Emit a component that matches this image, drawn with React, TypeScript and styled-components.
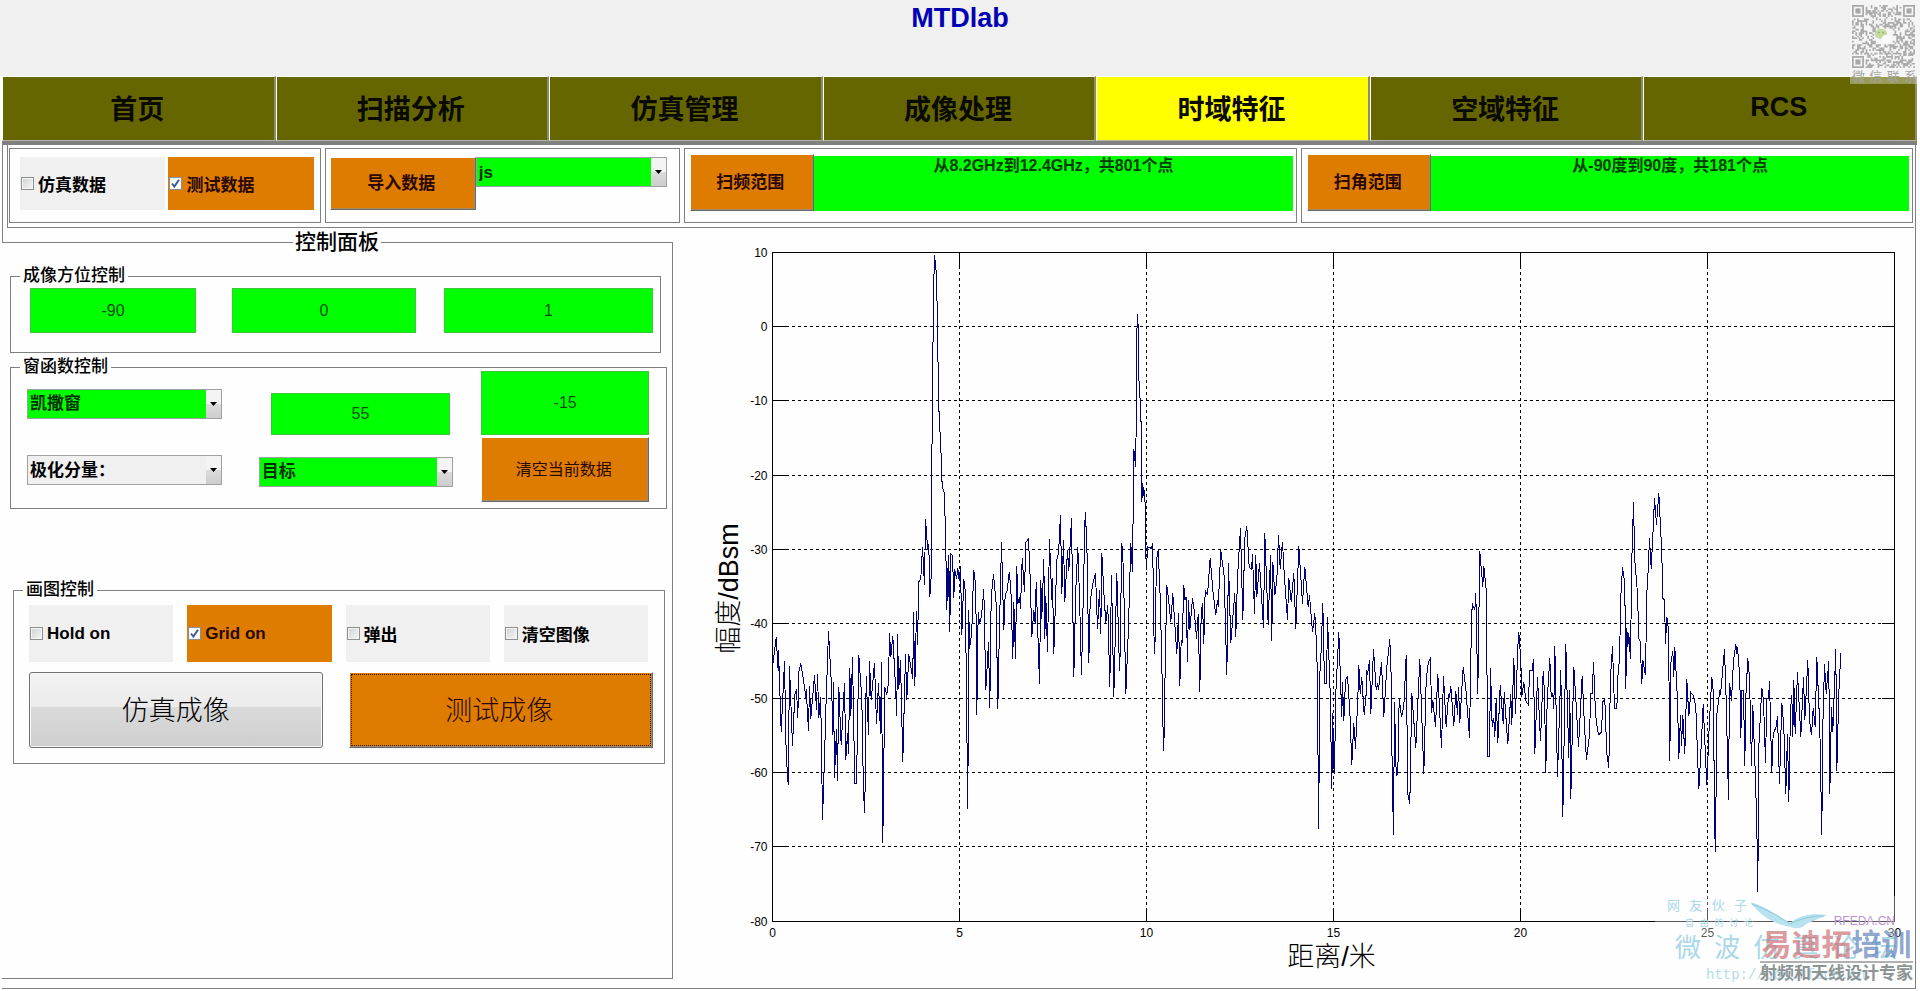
import React from "react";
import styled, { createGlobalStyle } from "styled-components";

const SANS = `"Liberation Sans", "Noto Sans CJK SC", sans-serif`;
const LINE = "#808080";
const GREEN = "#00ff00";
const ORANGE = "#de7c00";
const OLIVE = "#666600";

const GlobalStyle = createGlobalStyle`
  *, *::before, *::after { box-sizing: border-box; }
  body { margin: 0; background: #fefefe; color: #000; font-family: ${SANS}; font-size: 17px; }
  button, input, select { font-family: inherit; margin: 0; }
`;

/* ---------- page frame ---------- */

const Page = styled.div`
  position: relative;
  min-height: 100vh;
  display: flex;
  flex-direction: column;
`;

const Header = styled.header`
  height: 76px;
  padding-top: 2px;
  background: #f0f0f0;
  text-align: center;
`;

const Title = styled.h1`
  margin: 0;
  font-size: 27px;
  line-height: 32px;
  color: #0000b4;
`;

const Tabs = styled.nav`
  display: grid;
  grid-template-columns: repeat(7, minmax(0, 1fr));
  margin: 0 3px 0 2px;
  border-bottom: 4px solid ${LINE};
`;

const Tab = styled.button<{ $active?: boolean }>`
  height: 65px;
  padding: 0 2px 3px 0;
  border: solid;
  border-width: 1px 2px 1px 1px;
  border-color: #fffff0 #8c8c74 #b4b4a0 #fffff0;
  background: ${(p) => (p.$active ? "#ffff00" : OLIVE)};
  color: #0a0a00;
  font-size: 27px;
  font-weight: 700;
`;

const Frame = styled.main`
  position: relative;
  margin: 0 4px 0 2px;
  border-right: 1px solid ${LINE};
  border-bottom: 1px solid ${LINE};
`;

/* ---------- toolbar ---------- */

const ToolbarShell = styled.div`
  border-left: 1px solid ${LINE};
  padding: 0 1px 14px 4px;
  margin-bottom: -14px;
`;

const Toolbar = styled.div`
  display: grid;
  grid-template-columns: 312fr 355fr 614fr 612fr;
  gap: 4px;
  height: 83px;
  padding: 3px 1px 4px 1px;
  border-left: 1px solid ${LINE};
  border-bottom: 1px solid ${LINE};
`;

const Section = styled.section<{ $lead?: number }>`
  display: flex;
  align-items: flex-start;
  min-width: 0;
  padding: ${(p) => (p.$lead ? "5px 3px 0 5px" : "8px 6px 0 10px")};
  border: 1px solid ${LINE};
`;

const ImportSection = styled(Section)`
  padding: 8px 12px 0 4px;
`;

const DataChoices = styled.div`
  flex: 1;
  display: grid;
  grid-template-columns: 1fr 1fr;
  gap: 3px;
`;

const Choice = styled.label<{ $on?: boolean; $tall?: boolean }>`
  display: flex;
  align-items: center;
  gap: 4px;
  height: ${(p) => (p.$tall ? 57 : 53)}px;
  padding-left: 1px;
  background: ${(p) => (p.$on ? ORANGE : "#f0f0f0")};
  color: ${(p) => (p.$on ? "#2a0800" : "#000")};
  font-size: 17px;
  font-weight: 700;
  white-space: nowrap;
`;

const Tick = styled.span`
  display: grid;
  width: 13px;
  height: 13px;
  & > * { grid-area: 1 / 1; }
`;

const TickInput = styled.input`
  appearance: none;
  width: 13px;
  height: 13px;
  border: 1px solid #8e8f8f;
  background: linear-gradient(135deg, #cfd2d5, #f6f6f6);
  box-shadow: inset 0 0 0 1px #f4f4f4;
  &:checked { background: #fff; }
  &:not(:checked) + svg { visibility: hidden; }
`;

const PushButton = styled.button<{ $size?: number; $bold?: boolean }>`
  width: 100%;
  height: 100%;
  padding: 0 3px 4px 0;
  border: 1px solid;
  border-color: #fff #696969 #696969 #fff;
  box-shadow: inset -1px -1px 0 #a88a60;
  background: ${ORANGE};
  color: #2a0800;
  font-size: ${(p) => p.$size ?? 17}px;
  font-weight: ${(p) => (p.$bold ? 700 : 400)};
  white-space: nowrap;
`;

const ImportSlot = styled.div`
  flex: 0 0 146px;
  height: 53px;
`;

const RangeSlot = styled.div`
  flex: 0 0 124px;
  height: 57px;
`;

const RangeText = styled.output`
  flex: 1;
  height: 55px;
  margin-top: 2px;
  background: ${GREEN};
  color: #003c00;
  font-size: 16px;
  font-weight: 700;
  line-height: 20px;
  text-align: center;
`;

/* ---------- form parts ---------- */

const Dropdown = styled.div`
  position: relative;
  width: 100%;
  height: 30px;
`;

const Select = styled.select<{ $plain?: boolean }>`
  appearance: none;
  width: 100%;
  height: 30px;
  padding: 0 18px 0 2px;
  border: 1px solid #a0a0a0;
  border-radius: 0;
  background: ${(p) => (p.$plain ? "#f0f0f0" : GREEN)};
  color: ${(p) => (p.$plain ? "#000" : "#003000")};
  font-size: 17px;
  font-weight: 700;
`;

const Arrow = styled.span`
  position: absolute;
  top: 1px;
  right: 1px;
  bottom: 1px;
  width: 15px;
  display: grid;
  place-items: center;
  background: linear-gradient(#f4f4f4 50%, #dcdcdc 50%, #cdcdcd);
  pointer-events: none;
`;

const GreenInput = styled.input<{ $height: number }>`
  width: 100%;
  min-width: 0;
  height: ${(p) => p.$height}px;
  padding: 0;
  border: 1px solid #3cc83c;
  background: ${GREEN};
  color: #0a500a;
  font-size: 16px;
  text-align: center;
`;

/* ---------- left control panel ---------- */

const Workspace = styled.div`
  display: grid;
  grid-template-columns: minmax(0, 671fr) minmax(0, 1242fr);
`;

const ControlPanel = styled.fieldset`
  min-width: 0;
  margin: 3px 0 9px;
  padding: 0;
  border: solid ${LINE};
  border-width: 1px 1px 1px 0;
`;

const PanelLegend = styled.legend`
  margin: 0 auto;
  padding: 0 2px;
  font-size: 21px;
  line-height: 22px;
  font-weight: 500;
`;

const Group = styled.fieldset<{ $margin: string; $padding: string }>`
  min-width: 0;
  margin: ${(p) => p.$margin};
  padding: ${(p) => p.$padding};
  border: 1px solid ${LINE};
`;

const GroupLegend = styled.legend`
  margin-left: 9px;
  padding: 0 3px;
  font-size: 17px;
  line-height: 20px;
  font-weight: 500;
`;

const AngleRow = styled.div`
  display: grid;
  grid-template-columns: 166fr 36fr 184fr 28fr 209fr;
  padding: 0 7px 0 19px;
  & > :nth-child(2) { grid-column: 3; }
  & > :nth-child(3) { grid-column: 5; }
`;

const WindowGrid = styled.div`
  display: grid;
  grid-template-columns: 195fr 232fr 196fr;
  grid-template-rows: 64px 65px;
  row-gap: 2px;
  align-items: center;
  margin-top: -6px;
  padding: 0 17px 0 16px;
  & > :nth-child(3n + 1) { padding-top: 1px; }
  & > :nth-child(3n + 2) { padding-left: 37px; }
`;

const ThresholdCell = styled.div`
  height: 100%;
  padding-left: 28px;
`;

const KaiserSlot = styled.div`
  align-self: end;
  & > input { margin-left: 12px; width: calc(100% - 15px); }
`;

const PickerCell = styled.div`
  padding-top: 4px;
`;

const PlotChoices = styled.div`
  display: grid;
  grid-template-columns: repeat(4, minmax(0, 1fr));
  gap: 14px;
  padding: 0 16px 0 15px;
`;

const ActionRow = styled.div`
  display: grid;
  grid-template-columns: 294fr 305fr;
  gap: 26px;
  height: 76px;
  margin-top: 10px;
  padding: 0 11px 0 15px;
`;

const SilverButton = styled.button`
  padding: 0 0 4px;
  border: 1px solid #707070;
  border-radius: 3px;
  box-shadow: inset 0 0 0 1px #f8f8f8;
  background: linear-gradient(#f2f2f2, #ebebeb 46%, #dadada 46%, #cfcfcf);
  color: #000;
  font-size: 27px;
  font-weight: 300;
`;

const FocusedButton = styled(PushButton)`
  font-weight: 300;
  outline: 1px dotted #301800;
  outline-offset: -3px;
`;

/* ---------- chart ---------- */

const Chart = styled.svg`
  display: block;
  width: 100%;
  height: auto;
  font-family: ${SANS};
  font-size: 12px;
`;

/* Each block holds x,y pairs in thirds of a pixel, offset by its own origin
   from the top-left corner of the axes. */
const SWEEP: { dx: number; dy: number; points: string }[] = [
  {
    dx: -37,
    dy: 1043,
    points:
      "38,195 48,112 54,212 55,150 63,395 73,183 78,465 84,555 88,198 97,437 104,285 109,267 113,352 116,215 122,190 133,260 137,295 138,268 145,392 148,258 152,355 163,225 169,330 172,222 176,352 181,292 183,375 187,660 194,445 197,330 205,93 215,275 218,405 220,247 223,533 229,388 232,542 236,262 243,435 253,248 257,478 262,400 265,460 269,205 272,348 277,170 284,550 289,550 296,165 305,295 310,578 314,638 318,228 325,403 328,183 333,300 343,188 349,372 355,250 361,400 364,186 368,728 374,260 380,285 385,245 388,98 392,170 398,108 405,240 410,348 412,102 416,265 421,180 428,485 436,163 440,298 446,163 458,235 460,37 464,258 469,33 472,135",
  },
  {
    dx: -217,
    dy: -67,
    points:
      "656,1055 662,1045 667,952 673,1065 676,867 683,960 686,943 689,1100 693,1040 695,660 697,600 698,385 701,155 703,75 709,135 711,240 714,430 717,570 721,625 726,770 733,790 737,955 740,1140 743,1015 745,1100 746,975 749,1205 752,972 757,975 761,1103 764,1018 769,1045 773,1015 777,1052 781,1008 785,1213 791,1048 795,1080 798,1310 801,1590 803,1737 806,1140 808,1255 815,1205 818,1100 821,1020 827,1070 830,1455 834,1145 838,1180 844,1158 851,1078 857,1380 865,1237 869,1432 873,1100 880,1033 888,1120 893,1437 897,1230 904,937 911,1200 915,1093 921,1082 927,1027 932,1070 938,1285 941,1115 946,1285 950,1007 953,1120 958,1100 961,1135 966,985 973,1085 977,937 985,925 990,1045 995,1220 1001,1140 1005,1180 1008,1055 1018,1362 1022,1050 1025,1165 1031,987 1034,1225 1037,1097 1042,1265 1048,927 1055,1110 1057,1045 1061,1270 1070,990 1075,970 1081,855 1085,1090 1090,930 1094,1115 1102,960 1106,1022 1114,865 1121,1340 1127,1080 1133,950 1138,1100 1144,1335 1155,847 1160,930 1166,1297 1170,1115 1178,1060 1186,1030 1192,1195 1198,1080 1202,1210 1205,968 1211,1085 1217,1178 1223,1125 1229,1370 1234,1035 1241,1400 1250,1030 1258,1320",
  },
  {
    dx: 923,
    dy: 683,
    points:
      "119,570 125,188 130,270 137,642 145,440 152,190 157,275 160,0 161,-92 164,-65 166,-40 169,-210 170,-440 172,-498 175,-440 176,-310 179,-247 182,-245 183,-115 185,65 188,10 190,48 194,30 196,150 198,268 203,200 214,205 218,190 220,435 224,520 229,240 234,210 240,350 245,545 248,720 251,812 255,560 260,315 266,365 272,425 278,340 290,522 295,400 299,617 303,480 306,485 311,315 314,360 318,350 322,545 325,360 329,450 337,355 342,390 349,475 354,403 359,635 363,400 367,368 371,490 375,330 382,345 390,233 398,330 407,405 412,360 414,380 422,210 432,290 440,585 445,250 452,487 464,340 467,470 472,290 481,145 488,418 494,175 500,138 507,260 514,268 517,222 523,400 527,225 530,350 538,250 550,442 554,160 564,435 571,225 575,482 578,245 584,345 590,300 595,165 600,265 607,185 612,280 622,420 626,295 633,365 641,280 647,445 656,198 667,370 674,260 684,380 688,345 697,455 704,400 709,490 712,600 714,905 716,1047 718,600 723,510 728,370 733,610 739,610 742,410 750,640 755,925 758,700 760,850 763,880 767,640 770,580 776,457 785,710 787,605 791,722 796,600 802,590 809,690 815,853 821,730 826,805 833,655 836,555 840,640 845,592 852,705 858,640 860,570 862,585 868,540 872,700 880,508 888,630 892,610 895,630 904,547 911,710 920,560 929,478 933,590 936,880 940,1065 943,665 948,885 953,880 957,655 964,710 971,680 978,525 983,940 989,972 995,640 1007,803 1019,537 1031,880 1038,600 1044,550 1051,532 1054,697 1058,660 1066,740 1073,583 1079,700 1084,803 1090,588 1098,740 1105,645 1108,650 1112,618 1121,738 1127,632 1132,705 1135,620 1139,727 1149,560 1157,625 1168,773 1173,470 1176,370 1184,390 1187,340 1193,640 1199,213 1208,320 1211,257 1218,330 1223,830 1228,828 1231,565 1236,740 1241,715 1244,770 1248,655 1253,787",
  },
  {
    dx: 2123,
    dy: 623,
    points:
      "60,676 69,790 72,697 83,852 92,703 95,795 101,595 106,762 113,560 116,517 122,600 125,710 131,665 137,722 144,733 149,632 156,630 160,598 164,882 172,652 181,843 189,632 193,700 197,937 201,720 209,593 213,710 218,700 221,745 224,557 232,950 242,630 248,1070 257,552 266,893 269,690 272,1015 281,620 287,715 295,860 306,648 313,800 319,898 328,825 332,700 336,700 340,605 346,760 352,810 356,823 364,815 368,725 374,718 380,880 386,922 391,650 397,558 403,745 410,745 414,630 418,600 422,410 427,322 434,370 437,687 440,505 443,560 446,520 451,597 455,300 460,127 464,300 472,400 476,535 480,545 485,672 488,600 496,645 500,400 504,330 508,235 513,325 518,230 523,115 529,193 536,100 541,200 545,280 548,415 553,420 556,550 560,470 565,510 569,902 572,610 578,572 581,650 584,562 592,720 596,895 601,765 604,858 608,765 614,880 620,657 626,768 632,697 640,705 647,740 656,987 662,880 669,733 680,975 687,800 695,652 700,700 703,1095 706,1175 710,765 719,690 721,705 733,568 738,720 745,1020 748,668 754,722 760,600 767,552 770,580 772,562 779,650 782,833 785,690 790,690 794,917 797,710 803,595 808,650 814,917 818,735 826,960 830,1095 833,1295 836,860 845,683 850,720 856,908 860,715 865,715 868,663 875,935 879,820 888,800 892,767 898,970 905,728 911,800 917,1000 922,823 926,1025 931,750 935,705 938,830 941,660 945,820 952,637 962,830 970,652 974,780 983,600 988,780 994,825 999,745 1005,800 1010,592 1019,800 1025,1123 1028,800 1033,612 1038,700 1046,603 1049,1000 1054,740 1058,815 1067,568 1070,932 1076,700 1082,578",
  },
];

const tracePoints = SWEEP.flatMap(({ dx, dy, points }) =>
  points.split(" ").map((pair) => {
    const [x, y] = pair.split(",").map(Number);
    return `${((x + dx) / 3).toFixed(1)},${((y + dy) / 3).toFixed(1)}`;
  })
).join(" ");

const PLOT_W = 1122;
const PLOT_H = 669;
const TICK = 13;
const X_TICKS = [0, 5, 10, 15, 20, 25, 30];
const Y_TICKS = [10, 0, -10, -20, -30, -40, -50, -60, -70, -80];

function TimeDomainChart() {
  return (
    <Chart viewBox="0 0 1242 760" role="img" aria-label="幅度 / 距离">
      <g transform="translate(99.5 24.5)">
        <g shapeRendering="crispEdges" stroke="#000" fill="none">
          {X_TICKS.slice(1, -1).map((v) => {
            const x = Math.round((v / 30) * PLOT_W);
            return (
              <g key={v}>
                <path d={`M${x} ${TICK}V${PLOT_H - TICK}`} strokeDasharray="3 3" />
                <path d={`M${x} 0V${TICK}M${x} ${PLOT_H}V${PLOT_H - TICK}`} />
              </g>
            );
          })}
          {Y_TICKS.slice(1, -1).map((v) => {
            const y = Math.floor(((10 - v) / 90) * PLOT_H);
            return (
              <g key={v}>
                <path d={`M${TICK} ${y}H${PLOT_W - TICK}`} strokeDasharray="3 3" />
                <path d={`M0 ${y}H${TICK}M${PLOT_W} ${y}H${PLOT_W - TICK}`} />
              </g>
            );
          })}
          <rect width={PLOT_W} height={PLOT_H} />
          <polyline points={tracePoints} stroke="#00007c" />
        </g>
        {X_TICKS.map((v) => (
          <text key={v} x={Math.round((v / 30) * PLOT_W)} y={PLOT_H + 15} textAnchor="middle">
            {v}
          </text>
        ))}
        {Y_TICKS.map((v) => (
          <text key={v} x={-5} y={Math.floor(((10 - v) / 90) * PLOT_H) + 4} textAnchor="end">
            {v}
          </text>
        ))}
        <text x={PLOT_W / 2 - 2} y={713} textAnchor="middle" fontSize={27} fontWeight={300}>
          距离/米
        </text>
        <text transform="translate(-35 336) rotate(-90)" textAnchor="middle" fontSize={27} fontWeight={300}>
          幅度/dBsm
        </text>
      </g>
    </Chart>
  );
}

/* ---------- site marks over the page ---------- */

const QrMark = styled.aside`
  position: absolute;
  top: 0;
  right: 0;
  width: 70px;
  height: 84px;
  padding: 5px 3px 0 2px;
  background: rgba(255, 255, 255, 0.35);
  pointer-events: none;
`;

const QrCaption = styled.div`
  display: flex;
  justify-content: space-between;
  font-size: 13px;
  line-height: 18px;
  color: #a4a4a0;
`;

const QrSvg = styled.svg`
  display: block;
  width: 63px;
  height: 63px;
`;

const QR_SIZE = 37;

function qrModules() {
  let seed = 20137;
  let d = "";
  for (let y = 0; y < QR_SIZE; y++) {
    for (let x = 0; x < QR_SIZE; x++) {
      seed = (seed * 48271) % 2147483647;
      const finder = (x < 8 && y < 8) || (x > 28 && y < 8) || (x < 8 && y > 28);
      const centre = x > 13 && x < 24 && y > 13 && y < 23;
      if (!finder && !centre && seed / 2147483647 > 0.48) d += `M${x} ${y}h1v1h-1z`;
    }
  }
  return d;
}

function Spread({ text }: { text: string }) {
  return (
    <>
      {[...text].map((c) => (
        <span key={c}>{c}</span>
      ))}
    </>
  );
}

function QrCode() {
  return (
    <QrMark>
      <QrSvg viewBox={`0 0 ${QR_SIZE} ${QR_SIZE}`} aria-hidden="true">
        <path d={qrModules()} fill="#acacac" />
        {[[0, 0], [30, 0], [0, 30]].map(([x, y]) => (
          <g key={`${x}-${y}`}>
            <rect x={x + 0.5} y={y + 0.5} width="6" height="6" fill="none" stroke="#a8a8a8" />
            <rect x={x + 2} y={y + 2} width="3" height="3" fill="#a8a8a8" />
          </g>
        ))}
        <ellipse cx="17" cy="17" rx="3.6" ry="3" fill="#c3dba0" />
        <ellipse cx="20.5" cy="20" rx="3.2" ry="2.6" fill="#fafafa" />
        <g fill="#8fae6a">
          <circle cx="15.8" cy="16.2" r="0.5" />
          <circle cx="18.2" cy="16.2" r="0.5" />
        </g>
      </QrSvg>
      <QrCaption>
        <Spread text="微信联系" />
      </QrCaption>
    </QrMark>
  );
}

const ForumMark = styled.aside`
  position: absolute;
  right: 20px;
  bottom: 4px;
  width: 240px;
  height: 88px;
  background: rgba(255, 255, 255, 0.35);
  color: #a9d8ea;
  pointer-events: none;
  white-space: nowrap;
`;

const ForumRow = styled.div<{ $width: number; $size: number; $line: number; $left: number }>`
  display: flex;
  justify-content: space-between;
  width: ${(p) => p.$width}px;
  margin-left: ${(p) => p.$left}px;
  font-size: ${(p) => p.$size}px;
  line-height: ${(p) => p.$line}px;
`;

const ForumUrl = styled.div`
  margin-left: 51px;
  font-family: "Liberation Mono", monospace;
  font-size: 14px;
  line-height: 18px;
  color: #b4dcea;
`;

const Bird = styled.svg`
  position: absolute;
  left: 95px;
  top: 5px;
  width: 78px;
  height: 32px;
`;

const Domain = styled.span`
  position: absolute;
  right: 0;
  top: 17px;
  font-size: 12px;
  line-height: 16px;
  color: #b893cf;
`;

const TrainingMark = styled.aside`
  position: absolute;
  right: 2px;
  bottom: 3px;
  text-align: center;
  pointer-events: none;
`;

const TrainingName = styled.div`
  border-bottom: 2px solid #b0b0b0;
  font-size: 30px;
  line-height: 32px;
  font-weight: 700;
  color: rgba(205, 110, 115, 0.7);
  & > span { color: rgba(95, 130, 185, 0.7); }
`;

const TrainingNote = styled.div`
  font-size: 17px;
  line-height: 22px;
  font-weight: 700;
  color: #8c9494;
`;

/* ---------- composed controls ---------- */

function CheckOption({ label, checked, tall }: { label: string; checked?: boolean; tall?: boolean }) {
  return (
    <Choice $on={checked} $tall={tall}>
      <Tick>
        <TickInput type="checkbox" defaultChecked={checked} />
        <svg width="13" height="13" viewBox="0 0 13 13" aria-hidden="true">
          <path d="M3 6.5 5.4 9.6 10 2.8" fill="none" stroke="#3a5a9c" strokeWidth="2" />
        </svg>
      </Tick>
      {label}
    </Choice>
  );
}

function Picker({ value, name, plain }: { value: string; name: string; plain?: boolean }) {
  return (
    <Dropdown>
      <Select aria-label={name} defaultValue={value} $plain={plain}>
        <option>{value}</option>
      </Select>
      <Arrow>
        <svg width="7" height="4" viewBox="0 0 7 4" aria-hidden="true">
          <path d="M0 0h7L3.5 4z" />
        </svg>
      </Arrow>
    </Dropdown>
  );
}

const TABS = ["首页", "扫描分析", "仿真管理", "成像处理", "时域特征", "空域特征", "RCS"];

export default function App() {
  return (
    <Page>
      <GlobalStyle />
      <Header>
        <Title>MTDlab</Title>
      </Header>
      <Tabs>
        {TABS.map((t) => (
          <Tab key={t} type="button" $active={t === "时域特征"}>
            {t}
          </Tab>
        ))}
      </Tabs>
      <Frame>
        <ToolbarShell>
          <Toolbar>
            <Section>
              <DataChoices>
                <CheckOption label="仿真数据" />
                <CheckOption label="测试数据" checked />
              </DataChoices>
            </Section>
            <ImportSection>
              <ImportSlot>
                <PushButton type="button" $bold>导入数据</PushButton>
              </ImportSlot>
              <Picker name="数据文件" value="js" />
            </ImportSection>
            <Section $lead={1}>
              <RangeSlot>
                <PushButton type="button" $bold>扫频范围</PushButton>
              </RangeSlot>
              <RangeText>从8.2GHz到12.4GHz，共801个点</RangeText>
            </Section>
            <Section $lead={1}>
              <RangeSlot>
                <PushButton type="button" $bold>扫角范围</PushButton>
              </RangeSlot>
              <RangeText>从-90度到90度，共181个点</RangeText>
            </Section>
          </Toolbar>
        </ToolbarShell>
        <Workspace>
          <ControlPanel>
            <PanelLegend>控制面板</PanelLegend>
            <Group $margin="13px 11px 0 8px" $padding="2px 0 19px">
              <GroupLegend>成像方位控制</GroupLegend>
              <AngleRow>
                <GreenInput $height={45} aria-label="起始方位" defaultValue="-90" />
                <GreenInput $height={45} aria-label="当前方位" defaultValue="0" />
                <GreenInput $height={45} aria-label="方位步进" defaultValue="1" />
              </AngleRow>
            </Group>
            <Group $margin="4px 5px 0 8px" $padding="0 0 6px">
              <GroupLegend>窗函数控制</GroupLegend>
              <WindowGrid>
                <PickerCell>
                  <Picker name="窗函数" value="凯撒窗" />
                </PickerCell>
                <KaiserSlot>
                  <GreenInput $height={42} aria-label="窗参数" defaultValue="55" />
                </KaiserSlot>
                <ThresholdCell>
                  <GreenInput $height={64} aria-label="门限" defaultValue="-15" />
                </ThresholdCell>
                <PickerCell>
                  <Picker name="极化" value="极化分量：" plain />
                </PickerCell>
                <PickerCell>
                  <Picker name="数据类型" value="目标" />
                </PickerCell>
                <ThresholdCell>
                  <PushButton type="button" $size={16}>清空当前数据</PushButton>
                </ThresholdCell>
              </WindowGrid>
            </Group>
            <Group $margin="71px 7px 0 11px" $padding="5px 0 15px">
              <GroupLegend>画图控制</GroupLegend>
              <PlotChoices>
                <CheckOption label="Hold on" tall />
                <CheckOption label="Grid on" checked tall />
                <CheckOption label="弹出" tall />
                <CheckOption label="清空图像" tall />
              </PlotChoices>
              <ActionRow>
                <SilverButton type="button">仿真成像</SilverButton>
                <FocusedButton type="button" $size={27}>测试成像</FocusedButton>
              </ActionRow>
            </Group>
          </ControlPanel>
          <TimeDomainChart />
        </Workspace>
        <ForumMark>
          <ForumRow $width={80} $size={13} $line={20} $left={12}>
            <Spread text="网友伙子" />
          </ForumRow>
          <ForumRow $width={68} $size={9} $line={14} $left={30}>
            <Spread text="自由的讨论" />
          </ForumRow>
          <ForumRow $width={222} $size={26} $line={36} $left={20}>
            <Spread text="微波仿真论坛" />
          </ForumRow>
          <ForumUrl>http://bbs.rfeda.cn</ForumUrl>
          <Bird viewBox="0 0 78 32" aria-hidden="true">
            <path d="M0 1C12 4 28 14 40 22C50 14 62 12 77 14C68 19 60 20 55 24C49 30 42 26 36 25C22 22 10 14 0 1Z" fill="#b9e2ef" />
            <path d="M2 3C16 8 30 16 40 23C52 17 62 15 74 15" fill="none" stroke="#8ec9e0" />
          </Bird>
          <Domain>RFEDA.CN</Domain>
        </ForumMark>
        <TrainingMark>
          <TrainingName>
            易迪拓<span>培训</span>
          </TrainingName>
          <TrainingNote>射频和天线设计专家</TrainingNote>
        </TrainingMark>
      </Frame>
      <QrCode />
    </Page>
  );
}
